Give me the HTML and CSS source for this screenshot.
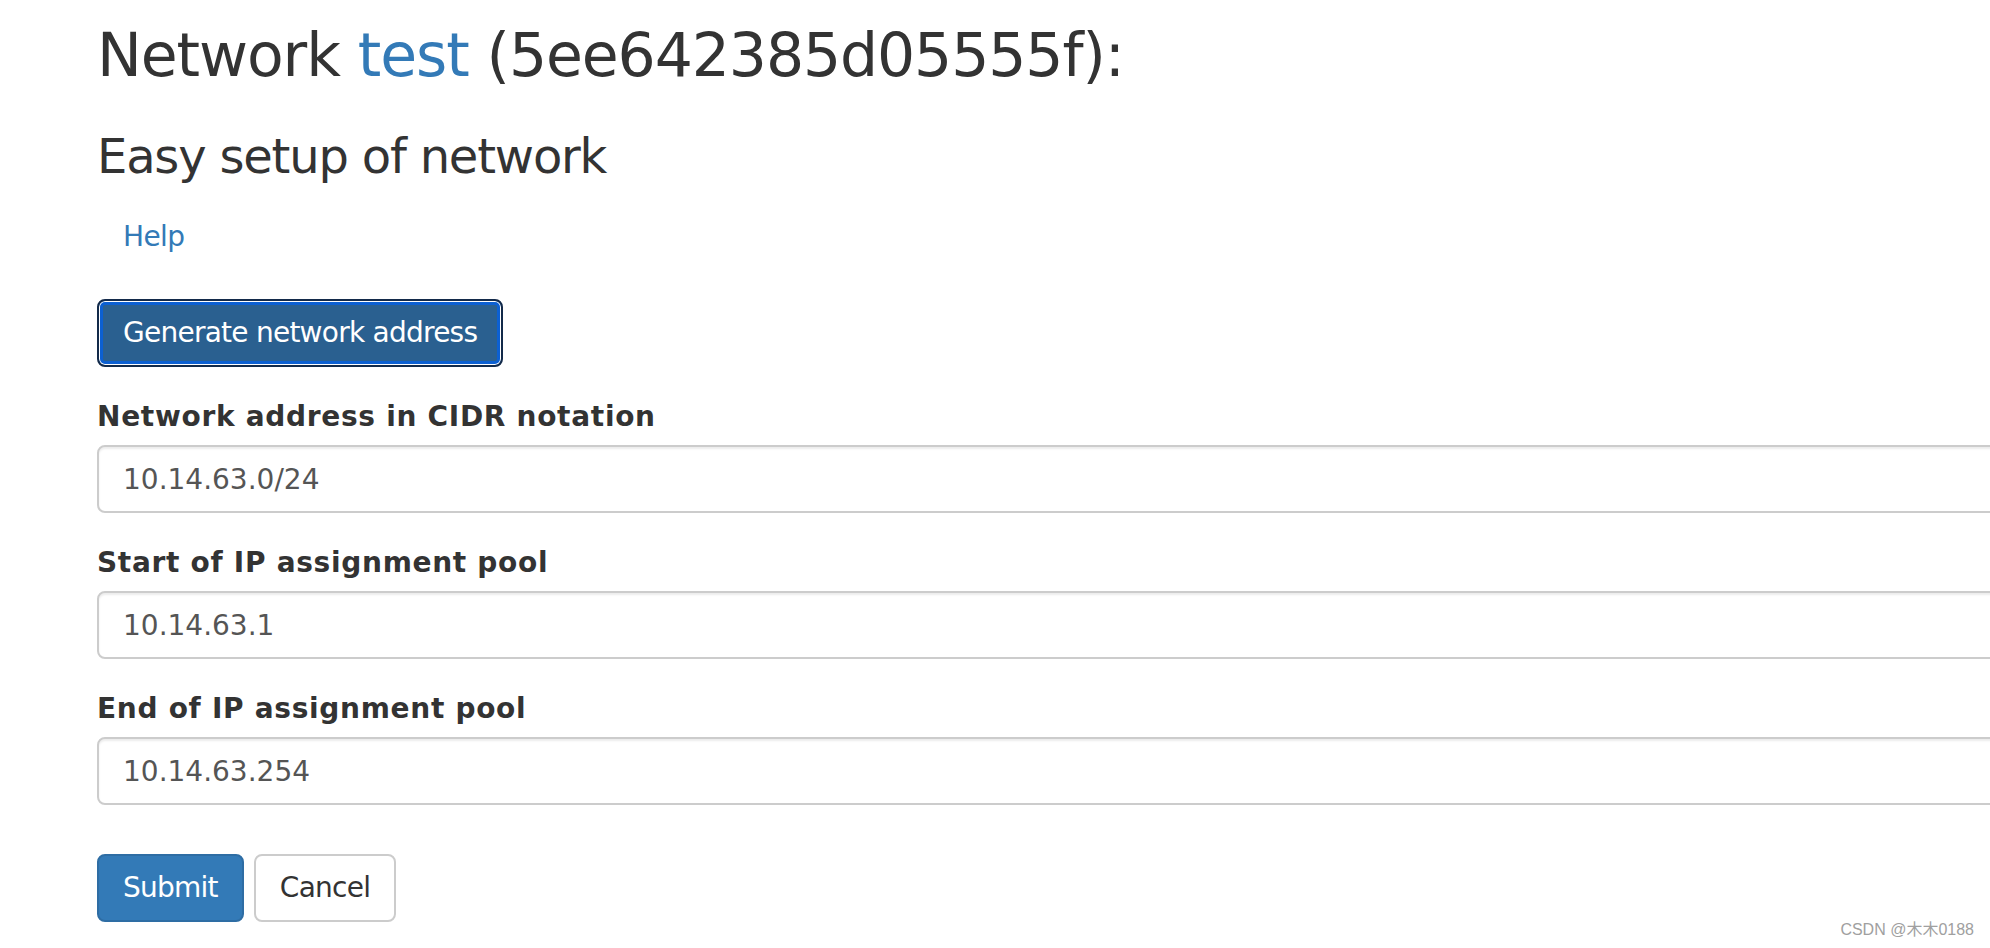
FILE: index.html
```html
<!DOCTYPE html>
<html lang="en">
<head>
<meta charset="utf-8">
<title>Network test</title>
<link rel="stylesheet" href="styles.css">
</head>
<body>
<div class="page">
  <h2 class="title">Network <a class="link" href="#">test</a> (5ee642385d05555f):</h2>
  <h3 class="subtitle">Easy setup of network</h3>
  <p class="help"><a class="link" href="#">Help</a></p>
  <button class="btn btn-generate" type="button">Generate network address</button>
  <form class="form">
    <div class="form-group">
      <label class="label" for="cidr">Network address in CIDR notation</label>
      <input class="input" id="cidr" type="text" value="10.14.63.0/24">
    </div>
    <div class="form-group">
      <label class="label" for="start">Start of IP assignment pool</label>
      <input class="input" id="start" type="text" value="10.14.63.1">
    </div>
    <div class="form-group">
      <label class="label" for="end">End of IP assignment pool</label>
      <input class="input" id="end" type="text" value="10.14.63.254">
    </div>
    <div class="actions">
      <button class="btn btn-primary" type="button">Submit</button>
      <button class="btn btn-default" type="button">Cancel</button>
    </div>
  </form>
</div>
<div class="watermark">CSDN @木木0188</div>
</body>
</html>
```
FILE: styles.css
```css
html, body {
  margin: 0;
  padding: 0;
  overflow: hidden;
  background: #fff;
}
body {
  font-family: "DejaVu Sans", "Noto Sans CJK SC", sans-serif;
  font-size: 28px;
  line-height: 40px;
  color: #333;
  width: 1990px;
  height: 948px;
  position: relative;
}
.page {
  padding-left: 97px;
  width: 1960px;
}
.link {
  color: #337ab7;
  text-decoration: none;
}
.title {
  font-size: 60px;
  font-weight: 400;
  line-height: 66px;
  margin: 22px 0 0 0;
  letter-spacing: -1.1px;
}
.subtitle {
  font-size: 48px;
  font-weight: 400;
  line-height: 53px;
  margin: 42px 0 0 0;
  letter-spacing: -1.2px;
}
.help {
  margin: 34px 0 0 0;
  padding-left: 26px;
  letter-spacing: -0.6px;
}
.btn {
  font-family: inherit;
  font-size: 28px;
  line-height: 40px;
  padding: 12px 24px;
  border-radius: 8px;
  border: 2px solid transparent;
  letter-spacing: -0.75px;
  cursor: pointer;
  display: inline-block;
}
.btn-generate {
  margin-top: 42px;
  margin-bottom: 30px;
  background: #2a6090;
  color: #fff;
  border-color: #132a4a;
  box-shadow: inset 0 0 0 1px #fff, inset 0 0 0 4px #0c60d2;
}
.form-group {
  margin-bottom: 30px;
}
.label {
  display: block;
  font-weight: 700;
  margin-bottom: 8px;
  letter-spacing: 0.7px;
}
.input {
  display: block;
  box-sizing: border-box;
  width: 100%;
  height: 68px;
  padding: 12px 24px;
  font-family: inherit;
  font-size: 28px;
  line-height: 40px;
  color: #555;
  letter-spacing: 0;
  background: #fff;
  border: 2px solid #ccc;
  border-radius: 8px;
  box-shadow: inset 0 2px 2px rgba(0, 0, 0, 0.075);
}
.actions {
  display: flex;
  gap: 10px;
  margin-top: 49px;
}
.btn-primary {
  background: #337ab7;
  border-color: #2e6da4;
  color: #fff;
}
.btn-default {
  background: #fff;
  border-color: #ccc;
  color: #333;
}
.watermark {
  position: absolute;
  right: 16px;
  bottom: 8px;
  font-family: "Liberation Sans", "Noto Sans CJK SC", sans-serif;
  font-size: 16px;
  line-height: 20px;
  color: #a0a0a0;
}
```
